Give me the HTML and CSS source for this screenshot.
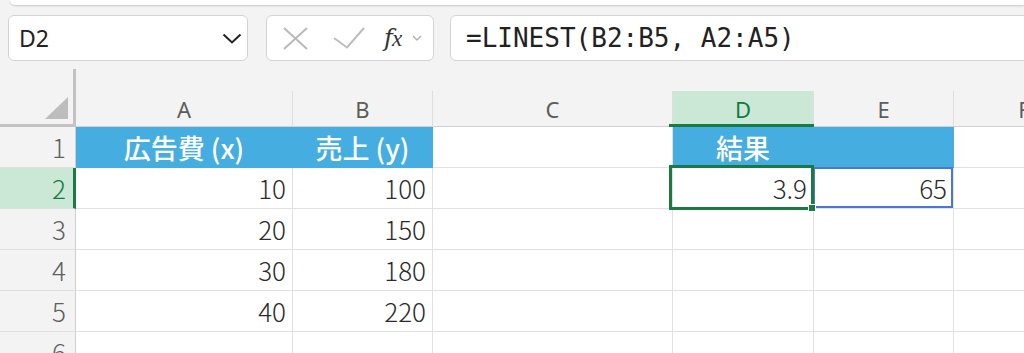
FILE: index.html
```html
<!DOCTYPE html>
<html lang="ja">
<head>
<meta charset="utf-8">
<link rel="stylesheet" href="styles.css">
</head>
<body>
<div class="topbar"></div>
<div class="fbar">
  <div class="namebox">
    <span class="ref">D2</span>
    <svg class="chev" width="20" height="11" viewBox="0 0 20 11"><path d="M1.5 1.5 L10 9.5 L18.5 1.5" fill="none" stroke="#222" stroke-width="2"/></svg>
  </div>
  <div class="btns">
    <svg class="ic-x" width="25" height="23" viewBox="0 0 25 23"><path d="M1 1 L24 22 M24 1 L1 22" stroke="#b9b9b9" stroke-width="2" fill="none"/></svg>
    <svg class="ic-ok" width="32" height="22" viewBox="0 0 32 22"><path d="M1 11 L14 20.5 L31 1" stroke="#bcbcbc" stroke-width="2" fill="none"/></svg>
    <span class="fx">f<span class="fx-x">x</span></span>
    <svg class="ic-chev" width="10" height="6" viewBox="0 0 10 6"><path d="M1 1 L5 5 L9 1" stroke="#b0b0b0" stroke-width="1.3" fill="none"/></svg>
  </div>
  <div class="formula">=LINEST(B2:B5, A2:A5)</div>
</div>

<div class="sheet">
  <div class="corner"><span class="tri"></span></div>
  <div class="ch">A</div>
  <div class="ch">B</div>
  <div class="ch">C</div>
  <div class="ch sel">D</div>
  <div class="ch">E</div>
  <div class="ch">F</div>

  <div class="rh">1</div>
  <div class="c hd">広告費 (x)</div>
  <div class="c hd">売上 (y)</div>
  <div class="c"></div>
  <div class="c hd">結果</div>
  <div class="c hd"></div>
  <div class="c"></div>

  <div class="rh sel">2</div>
  <div class="c">10</div>
  <div class="c">100</div>
  <div class="c"></div>
  <div class="c active">3.9</div>
  <div class="c spill">65</div>
  <div class="c"></div>

  <div class="rh">3</div>
  <div class="c">20</div>
  <div class="c">150</div>
  <div class="c"></div>
  <div class="c"></div>
  <div class="c"></div>
  <div class="c"></div>

  <div class="rh">4</div>
  <div class="c">30</div>
  <div class="c">180</div>
  <div class="c"></div>
  <div class="c"></div>
  <div class="c"></div>
  <div class="c"></div>

  <div class="rh">5</div>
  <div class="c">40</div>
  <div class="c">220</div>
  <div class="c"></div>
  <div class="c"></div>
  <div class="c"></div>
  <div class="c"></div>

  <div class="rh">6</div>
  <div class="c"></div>
  <div class="c"></div>
  <div class="c"></div>
  <div class="c"></div>
  <div class="c"></div>
  <div class="c"></div>
</div>
</body>
</html>
```

FILE: styles.css
```css
html, body {
  margin: 0;
  padding: 0;
}
body {
  background: #f3f3f3;
  width: 1024px;
  height: 353px;
  overflow: hidden;
  font-family: "Noto Sans CJK JP", "Noto Sans", sans-serif;
}

.topbar {
  margin-left: 10px;
  height: 5px;
  background: #fff;
  border-bottom-left-radius: 6px;
  box-shadow: 0 1px 2px rgba(0, 0, 0, 0.18);
}

.fbar {
  display: flex;
  margin-top: 10px;
  padding-left: 8px;
  gap: 18px;
  height: 46px;
  margin-right: -30px;
}

.namebox {
  width: 240px;
  box-sizing: border-box;
  border: 1px solid #d3d3d3;
  border-radius: 6px;
  background: #fff;
  display: flex;
  align-items: center;
  justify-content: space-between;
  padding: 0 5px 0 10px;
}
.ref {
  font-family: "Noto Sans", sans-serif;
  font-size: 23px;
  color: #222;
  line-height: 1;
}

.btns {
  width: 168px;
  box-sizing: border-box;
  border: 1px solid #d3d3d3;
  border-radius: 6px;
  background: #fff;
  display: flex;
  align-items: center;
  padding-left: 16px;
}
.ic-ok { margin-left: 25px; }
.fx {
  margin-left: 19px;
  font-family: "DejaVu Serif", serif;
  font-style: italic;
  font-size: 24px;
  color: #333;
  line-height: 1;
  letter-spacing: -1px;
}
.fx-x {
  font-family: "Liberation Serif", serif;
  font-style: italic;
  font-size: 23px;
}
.ic-chev { margin-left: 11px; }

.formula {
  flex: 1;
  margin-left: -2px;
  box-sizing: border-box;
  border: 1px solid #d3d3d3;
  border-radius: 6px;
  background: #fff;
  display: flex;
  align-items: center;
  padding-left: 15px;
  font-family: "DejaVu Sans Mono", monospace;
  font-size: 26px;
  color: #222;
}

.sheet {
  display: grid;
  grid-template-columns: 76px 217px 140px 240px 141px 140px 141px;
  grid-template-rows: 58px repeat(6, 41px);
  margin-top: 8px;
}
.sheet > div {
  box-sizing: border-box;
}

.corner {
  border-right: 3px solid #c3c3c3;
  border-bottom: 3px solid #c3c3c3;
  display: flex;
  justify-content: flex-end;
  align-items: flex-end;
  padding: 0 5px 5px 0;
}
.tri {
  width: 0;
  height: 0;
  border-left: 23px solid transparent;
  border-bottom: 22px solid #bdbdbd;
}

.ch {
  margin-top: 22px;
  border-right: 1px solid #dedede;
  border-bottom: 1px solid #d2d2d2;
  display: flex;
  align-items: center;
  justify-content: center;
  font-family: "Noto Sans", sans-serif;
  font-size: 22px;
  color: #5c5c5c;
  position: relative;
}
.ch.sel {
  background: #cae8d5;
  color: #107c41;
}
.ch.sel::after {
  content: "";
  position: absolute;
  left: -4px;
  right: -1px;
  bottom: -1px;
  height: 3px;
  background: #1a7a43;
}

.rh {
  border-right: 1px solid #cfcfcf;
  border-bottom: 1px solid #e0e0e0;
  display: flex;
  align-items: center;
  justify-content: flex-end;
  padding-right: 9px;
  font-size: 26px;
  font-weight: 300;
  color: #5f5f5f;
  line-height: 1;
}
.rh.sel {
  background: #cae8d5;
  color: #107c41;
  border-right: 3px solid #1a7a43;
  padding-right: 7px;
}

.c {
  background: #fff;
  border-right: 1px solid #e1e1e1;
  border-bottom: 1px solid #e1e1e1;
  display: flex;
  align-items: center;
  justify-content: flex-end;
  padding-right: 6px;
  font-size: 26px;
  font-weight: 300;
  color: #2b2b2b;
  line-height: 1;
  position: relative;
}
.hd {
  background: #45ade0;
  border-color: #45ade0;
  color: #fff;
  font-weight: 500;
  justify-content: center;
  padding-right: 0;
  font-size: 27px;
}

.active::after {
  content: "";
  position: absolute;
  top: -3px;
  left: -4px;
  right: -1px;
  bottom: -2px;
  border: 3px solid #1a7a43;
  z-index: 3;
}
.active::before {
  content: "";
  position: absolute;
  width: 6px;
  height: 6px;
  right: -3px;
  bottom: -4px;
  background: #1a7a43;
  border: 1px solid #fff;
  z-index: 4;
}
.spill::after {
  content: "";
  position: absolute;
  top: -1px;
  left: -1px;
  right: 0;
  bottom: 0;
  border: 2px solid #4a76d6;
  z-index: 2;
}
```
